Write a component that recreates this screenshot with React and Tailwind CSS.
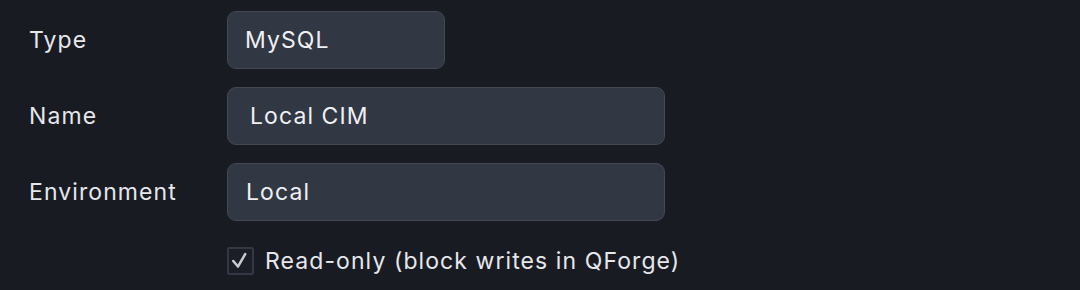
export default function App() {
  const rows = [
    { label: 'Type', value: 'MySQL', w: 'w-[218px]', pad: 'pl-[17px]' },
    { label: 'Name', value: 'Local CIM', w: 'w-[438px]', pad: 'pl-[22px]' },
    { label: 'Environment', value: 'Local', w: 'w-[438px]', pad: 'pl-[18px]' },
  ]

  return (
    <div className="w-[1080px] h-[290px] bg-[#191b23] pt-[11px] text-[23px] tracking-[0.047em] font-['Inter',sans-serif]">
      <div className="flex flex-col gap-[18px]">
        {rows.map((r) => (
          <div key={r.label} className="flex items-center">
            <div className="w-[227px] pl-[29px] text-[#e6e7ea]">{r.label}</div>
            <div
              className={`${r.w} ${r.pad} h-[58px] flex items-center rounded-[9px] bg-[#323744] border border-[#434855] text-[#eef0f3]`}
            >
              {r.value}
            </div>
          </div>
        ))}
      </div>
      <label className="mt-[23px] ml-[227px] flex items-center gap-[11px] text-[#e6e7ea]">
        <span className="w-[27px] h-[28px] flex items-center justify-center rounded-[2px] border-2 border-[#343844] bg-[#1c1e27]">
          <svg width="27" height="28" viewBox="0 0 27 28" fill="none">
            <path d="M5 14 L10.5 20.5 L19 6" stroke="#c9cacd" strokeWidth="3" strokeLinecap="round" strokeLinejoin="round" />
          </svg>
        </span>
        <span>Read-only (block writes in QForge)</span>
      </label>
    </div>
  )
}
